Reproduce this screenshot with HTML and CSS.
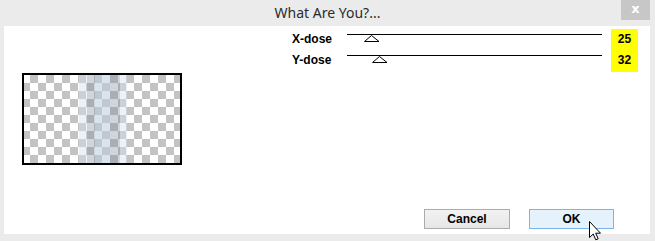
FILE: index.html
```html
<!DOCTYPE html>
<html lang="en">
<head>
<meta charset="UTF-8">
<title>What Are You?...</title>
<link rel="stylesheet" href="styles.css">
</head>
<body>

<div class="window">
  <div class="titlebar">
    <span></span>
    <span class="title">What Are You?...</span>
    <span class="close">x</span>
  </div>

  <div class="content">
    <!-- sliders -->
    <div class="sliders">
      <span class="label">X-dose</span>
      <div class="track">
        <div class="line"></div>
        <svg class="thumb" style="margin-left: 17px" width="16" height="7" viewBox="0 0 16 7"><polygon points="7.5,0.5 15,6.5 0.5,6.5" fill="#fff" stroke="#000" stroke-width="1"/></svg>
      </div>
      <span class="value">25</span>

      <span class="label">Y-dose</span>
      <div class="track">
        <div class="line"></div>
        <svg class="thumb" style="margin-left: 25px" width="16" height="7" viewBox="0 0 16 7"><polygon points="7.5,0.5 15,6.5 0.5,6.5" fill="#fff" stroke="#000" stroke-width="1"/></svg>
      </div>
      <span class="value">32</span>
    </div>

    <div class="preview"></div>

    <div class="buttons">
      <button class="btn">Cancel</button>
      <button class="btn btn-default">OK</button>
    </div>

    <svg class="cursor" width="13" height="20" viewBox="0 0 13 20">
      <polygon points="0.5,0.5 0.5,16.5 4.2,13 6.8,18.8 9.2,17.8 6.7,12.2 11.5,12.2" fill="#fff" stroke="#000" stroke-width="1" stroke-linejoin="miter"/>
    </svg>
  </div>
</div>

</body>
</html>
```

FILE: styles.css
```css
html, body {
    margin: 0;
    background: #fff;
  }
  .window {
    width: 655px;
    height: 241px;
    display: grid;
    grid-template-rows: 26px 1fr;
    background-color: #ebebeb;
  }
  .titlebar {
    display: grid;
    grid-template-columns: 1fr auto 1fr;
    align-items: start;
  }
  .title {
    font-family: "Noto Sans", sans-serif;
    font-size: 14px;
    line-height: 26px;
    color: #2b2b2b;
  }
  .close {
    justify-self: end;
    width: 29px;
    height: 20px;
    margin-right: 5px;
    background-color: #c7c7c7;
    color: #fff;
    font-family: "DejaVu Sans", sans-serif;
    font-weight: bold;
    font-size: 13px;
    line-height: 18px;
    text-align: center;
  }
  .content {
    position: relative;
    margin: 0 5px 7px 4px;
    background-color: #fff;
    display: flex;
    flex-direction: column;
    font-family: "Liberation Sans", Arial, sans-serif;
    font-weight: bold;
    font-size: 12px;
  }
  .sliders {
    align-self: flex-end;
    margin: 3px 12px 0 0;
    display: grid;
    grid-template-columns: 55px 255px 36px;
    grid-template-rows: 21px 22px;
  }
  .label {
    line-height: 21px;
    color: #000;
  }
  .track {
    padding-top: 5px;
  }
  .line {
    height: 1px;
    background-color: #000;
  }
  .thumb {
    display: block;
  }
  .value {
    margin-left: 9px;
    background-color: #ffff00;
    text-align: center;
    line-height: 21px;
    color: #000;
  }
  .preview {
    margin: 1px 0 0 18px;
    width: 160px;
    height: 92px;
    box-sizing: border-box;
    border: 2px solid #000;
    background:
      linear-gradient(to right,
        rgba(215, 225, 235, 0.45) 0 8px,
        rgba(120, 135, 150, 0.35) 8px 16px,
        rgba(185, 205, 222, 0.55) 16px 31px,
        rgba(120, 135, 150, 0.35) 31px 41px,
        rgba(215, 225, 235, 0.45) 41px 48px) 55px 0 / 48px 100% no-repeat,
      repeating-conic-gradient(#c3c3c3 0 25%, #fff 0 50%) -2px 0 / 16px 16px;
  }
  .buttons {
    margin-top: auto;
    align-self: flex-end;
    margin-right: 36px;
    margin-bottom: 5px;
    display: flex;
    gap: 19px;
  }
  .btn {
    width: 86px;
    height: 20px;
    padding: 0;
    font-family: "Liberation Sans", Arial, sans-serif;
    font-weight: bold;
    font-size: 12px;
    color: #000;
    background: linear-gradient(#f2f2f2, #e6e6e6);
    border: 1px solid #acacac;
  }
  .btn-default {
    width: 85px;
    background: #e5f1fb;
    border-color: #7eb4ea;
  }
  .cursor {
    position: absolute;
    left: 585px;
    top: 195px;
  }
```
